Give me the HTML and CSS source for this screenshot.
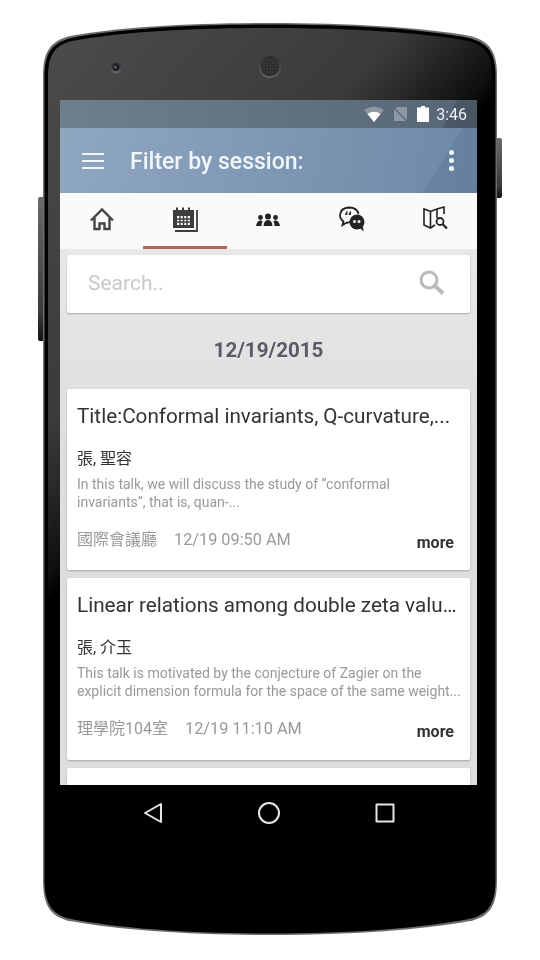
FILE: index.html
```html
<!DOCTYPE html>
<html lang="en">
<head>
    <meta charset="UTF-8">
    <title>Filter by session</title>
    <link rel="stylesheet" href="styles.css">
</head>
<body>
    <div class="phone">
        <!-- device shell sits behind the screen -->
        <svg class="shell" width="540" height="960" viewBox="0 0 540 960">
            <defs>
                <linearGradient id="shellFace" gradientUnits="userSpaceOnUse" x1="48" y1="28" x2="333" y2="280">
                    <stop offset="0" stop-color="#4c4c4c"/>
                    <stop offset="0.7" stop-color="#3a3a3a"/>
                    <stop offset="0.8" stop-color="#2a2a2a"/>
                    <stop offset="0.95" stop-color="#0f0f0f"/>
                    <stop offset="1" stop-color="#000"/>
                </linearGradient>
                <linearGradient id="keyFill" x1="0" y1="0" x2="0" y2="1">
                    <stop offset="0" stop-color="#6a6a6a"/>
                    <stop offset="0.8" stop-color="#3a3a3a"/>
                    <stop offset="1" stop-color="#111"/>
                </linearGradient>
                <linearGradient id="ringFill" x1="0" y1="0" x2="0" y2="1">
                    <stop offset="0" stop-color="#2a2a2a"/>
                    <stop offset="1" stop-color="#6a6a6a"/>
                </linearGradient>
                <pattern id="grille" width="3" height="3" patternUnits="userSpaceOnUse">
                    <circle cx="1.500" cy="1.500" r="0.700" fill="#222"/>
                </pattern>
            </defs>
            <rect x="38" y="197" width="8" height="144" rx="2" fill="url(#keyFill)"/>
            <rect x="494" y="138" width="8" height="60" rx="2" fill="url(#keyFill)"/>
            <path d="M43 76C43 52 50 41 70 36C120 27 190 23 270 23C350 23 420 27 470 36C490 41 497 52 497 76L497 880C497 905 490 917 470 921C420 930 350 935 270 935C190 935 120 930 70 921C50 917 43 905 43 880Z" fill="#6c6c6c"/>
            <path d="M44.500 76C44.500 53 52 43 71 38C120 28.500 190 24.500 270 24.500C350 24.500 420 28.500 469 38C488 43 495.500 53 495.500 76L495.500 880C495.500 904 488 915 469 919C420 928.500 350 933.500 270 933.500C190 933.500 120 928.500 71 919C52 915 44.500 904 44.500 880Z" fill="#000"/>
            <path d="M48 76C48 55 55 45 72 41C120 32 190 28 270 28C350 28 420 32 468 41C485 45 492 55 492 76L492 880C492 900 485 912 468 916C420 925 350 930 270 930C190 930 120 925 72 916C55 912 48 900 48 880Z" fill="url(#shellFace)"/>
            <circle cx="116" cy="68" r="5.500" fill="url(#ringFill)"/>
            <circle cx="116" cy="67.500" r="3.500" fill="#1c1c24"/>
            <circle cx="115.500" cy="67" r="1.500" fill="#5c5c78"/>
            <circle cx="270" cy="67" r="11" fill="url(#ringFill)"/>
            <circle cx="270" cy="67" r="9.500" fill="#343434"/>
            <circle cx="270" cy="67" r="8.500" fill="url(#grille)"/>
        </svg>

        <div class="screen">
            <div class="status-bar">
                <svg class="status-icon" width="20" height="16" viewBox="0 0 20 16">
                    <path d="M0 4Q10 -3 20 4L10 16Z" fill="#8d98a3"/>
                    <path d="M3.500 8Q10 3.500 16.500 8L10 16Z" fill="#fff"/>
                </svg>
                <svg class="status-icon" width="15" height="16" viewBox="0 0 15 16">
                    <path d="M4 1H14V15H1V4Z" fill="#8d98a3"/>
                    <path d="M0 1L15 16" stroke="#5c6b79" stroke-width="1.500"/>
                </svg>
                <svg class="status-icon" width="12" height="16" viewBox="0 0 12 16">
                    <path d="M4 0H8V1.500H12V16H0V1.500H4Z" fill="#fff"/>
                </svg>
                <span class="clock">3:46</span>
            </div>

            <header class="app-bar">
                <div class="menu-btn"><span></span><span></span><span></span></div>
                <h1 class="app-title">Filter by session:</h1>
                <div class="more-btn"><span></span><span></span><span></span></div>
            </header>

            <nav class="tabs">
                <div class="tab">
                    <svg width="28" height="28" viewBox="0 0 28 28" fill="none" stroke="#444" stroke-width="2.400">
                        <path d="M3 15.500L14 4.500L25 15.500"/>
                        <path d="M6.500 13V24H11.500V18.500H16.500V24H21.500V13"/>
                    </svg>
                </div>
                <div class="tab active">
                    <svg width="28" height="28" viewBox="0 0 28 28">
                        <path d="M2 5H5V2.500H7V5H11V2.500H13V5H17V2.500H19V5H23V23H2Z" fill="#3d3d3d"/>
                        <path d="M6 11H19V20H6Z" fill="#fafafa"/>
                        <path d="M9 11V20M12.500 11V20M16 11V20M6 14H19M6 17H19" stroke="#3d3d3d" stroke-width="1.400"/>
                        <path d="M26 5V26H4" fill="none" stroke="#3d3d3d" stroke-width="1.800"/>
                    </svg>
                </div>
                <div class="tab">
                    <svg width="28" height="28" viewBox="0 0 28 28" fill="#222">
                        <circle cx="14" cy="11.500" r="3"/>
                        <path d="M9.500 21Q10 15 14 15Q18 15 18.500 21Z"/>
                        <circle cx="6.500" cy="12.500" r="2.400"/>
                        <path d="M2 21Q3 15.500 6.500 15.500Q8 15.500 8.500 16.500Q7.500 18 7.500 21Z"/>
                        <circle cx="21.500" cy="12.500" r="2.400"/>
                        <path d="M26 21Q25 15.500 21.500 15.500Q20 15.500 19.500 16.500Q20.500 18 20.500 21Z"/>
                    </svg>
                </div>
                <div class="tab">
                    <svg width="28" height="28" viewBox="0 0 28 28">
                        <path d="M13 16Q12 17.500 8 18L4.500 20L5.500 16.500Q2 14 2 10Q2.500 3 11 2.500Q19 2.500 20.500 9" fill="none" stroke="#222" stroke-width="1.800"/>
                        <path d="M7.500 9.500L9 6.500V9.500ZM11 9.500L12.500 6.500V9.500Z" fill="#222" stroke="#222"/>
                        <circle cx="19" cy="17" r="7.500" fill="#222"/>
                        <path d="M22 23L25.500 26.500L25 21Z" fill="#222"/>
                        <circle cx="16.500" cy="16.500" r="1.500" fill="#fafafa"/>
                        <circle cx="21" cy="16.500" r="1.500" fill="#fafafa"/>
                    </svg>
                </div>
                <div class="tab">
                    <svg width="28" height="28" viewBox="0 0 28 28" fill="none" stroke="#222" stroke-width="1.600">
                        <path d="M14 20L9.500 23L3 20V4L9.500 6.500L16 4L23 2V9"/>
                        <path d="M9.500 6.500V23M16 4V13"/>
                        <circle cx="19" cy="16.500" r="3.500" stroke-width="1.800"/>
                        <path d="M21.500 19L26 23.500" stroke-width="2.200"/>
                    </svg>
                </div>
            </nav>

            <main class="content">
                <div class="search-box">
                    <span class="search-text">Search..</span>
                    <svg width="28" height="28" viewBox="0 0 28 28" fill="none" stroke="#bbb">
                        <circle cx="11" cy="10" r="8" stroke-width="3"/>
                        <path d="M17 16L25 23.500" stroke-width="4"/>
                    </svg>
                </div>

                <h2 class="date-head">12/19/2015</h2>

                <article class="card">
                    <h3 class="card-title">Title:Conformal invariants, Q-curvature,...</h3>
                    <div class="speaker">張, 聖容</div>
                    <p class="abstract">In this talk, we will discuss the study of ”conformal<br>invariants”, that is, quan-...</p>
                    <div class="card-foot">
                        <span class="place">國際會議廳</span>
                        <span class="time">12/19 09:50 AM</span>
                        <span class="more">more</span>
                    </div>
                </article>

                <article class="card">
                    <h3 class="card-title">Linear relations among double zeta valu…</h3>
                    <div class="speaker">張, 介玉</div>
                    <p class="abstract">This talk is motivated by the conjecture of Zagier on the explicit dimension formula for the space of the same weight...</p>
                    <div class="card-foot">
                        <span class="place">理學院104室</span>
                        <span class="time">12/19 11:10 AM</span>
                        <span class="more">more</span>
                    </div>
                </article>

                <article class="card"></article>
            </main>
        </div>

        <div class="nav-keys">
            <svg width="20" height="22" viewBox="0 0 20 22" fill="none" stroke="#e6e6e6" stroke-width="2" stroke-linejoin="round">
                <path d="M18 2V20L2 11Z"/>
            </svg>
            <svg width="22" height="22" viewBox="0 0 22 22" fill="none" stroke="#e6e6e6" stroke-width="2">
                <circle cx="11" cy="11" r="10"/>
            </svg>
            <svg width="20" height="20" viewBox="0 0 20 20" fill="none" stroke="#e6e6e6" stroke-width="2" stroke-linejoin="round">
                <rect x="1.500" y="1.500" width="17" height="17"/>
            </svg>
        </div>
    </div>
</body>
</html>
```

FILE: styles.css
```css
* {
    box-sizing: border-box;
}

body {
    margin: 0;
    background-color: #fff;
    font-family: Roboto, "Noto Sans CJK TC", sans-serif;
}

.phone {
    position: relative;
    width: 540px;
    height: 960px;
    padding: 100px 63px 0 60px;
    overflow: hidden;
}

.shell {
    position: absolute;
    top: 0;
    left: 0;
}

.screen {
    position: relative;
    width: 417px;
    height: 685px;
    overflow: hidden;
    display: flex;
    flex-direction: column;
    background-color: #e0e0e0;
    filter: blur(0.35px);
}

.status-bar {
    height: 28px;
    flex: none;
    display: flex;
    align-items: center;
    justify-content: flex-end;
    padding-right: 10px;
    background: linear-gradient(118deg, transparent 92%, rgba(0, 0, 0, 0.16) 92%), linear-gradient(100deg, #6f7f8e, #566676);
}

.status-icon {
    margin-right: 9px;
}

.status-icon + .clock {
    margin-left: -2px;
}

.clock {
    font-size: 16px;
    color: #eef1f3;
}

.app-bar {
    height: 65px;
    flex: none;
    display: flex;
    align-items: center;
    padding: 0 23px 0 22px;
    color: #f2f5f8;
    background: linear-gradient(122deg, transparent 88%, rgba(40, 70, 100, 0.12) 88%), linear-gradient(100deg, #90a7c0, #6d88a6);
}

.menu-btn {
    width: 22px;
    display: flex;
    flex-direction: column;
    gap: 5px;
    margin-right: 26px;
}

.menu-btn span {
    height: 2px;
    background-color: #f2f5f8;
}

.app-title {
    flex: 1;
    margin: 0;
    padding-top: 2px;
    font-size: 23px;
    font-weight: 500;
}

.more-btn {
    display: flex;
    flex-direction: column;
    gap: 3px;
}

.more-btn span {
    width: 5px;
    height: 5px;
    border-radius: 50%;
    background-color: #f2f5f8;
}

.tabs {
    height: 56px;
    flex: none;
    display: grid;
    grid-template-columns: repeat(5, 1fr);
    background-color: #fafafa;
    box-shadow: 0 1px 2px rgba(0, 0, 0, 0.15);
}

.tab {
    display: flex;
    align-items: center;
    justify-content: center;
    padding-bottom: 2px;
    border-bottom: 3px solid transparent;
}

.tab.active {
    border-bottom-color: #b85f5f;
}

.content {
    flex: 1;
    padding: 6px 7px 0;
    background: linear-gradient(#e8e8e8, #dedede 200px);
}

.search-box {
    height: 58px;
    display: flex;
    align-items: center;
    justify-content: space-between;
    padding: 0 24px 0 21px;
    background-color: #fff;
    border-radius: 2px;
    box-shadow: 0 1px 2px rgba(0, 0, 0, 0.25);
}

.search-text {
    font-size: 21px;
    color: #c8c8c8;
    position: relative;
    top: -1px;
}

.date-head {
    margin: 0;
    height: 76px;
    line-height: 74px;
    text-align: center;
    font-size: 20.600px;
    font-weight: 700;
    color: #5a5b69;
}

.card {
    height: 181.400px;
    margin-bottom: 8px;
    padding: 14px 10px 0;
    background-color: #fff;
    border-radius: 2px;
    box-shadow: 0 1px 2px rgba(0, 0, 0, 0.25);
}

.card-title {
    margin: 0;
    font-size: 20.700px;
    font-weight: 400;
    line-height: 26px;
    color: #333;
    white-space: nowrap;
}

.speaker {
    margin-top: 19px;
    font-size: 16px;
    line-height: 22px;
    color: #333;
}

.abstract {
    margin: 5px -8px 0 0;
    font-size: 14px;
    line-height: 18px;
    color: #999;
}

.card-foot {
    display: flex;
    align-items: baseline;
    margin-top: 15px;
    font-size: 16.300px;
    color: #999;
}

.place {
    margin-right: 17px;
    font-size: 16px;
}

.more {
    margin-left: auto;
    margin-right: 6px;
    position: relative;
    top: 3px;
    font-size: 16px;
    font-weight: 700;
    color: #333;
}

.nav-keys {
    position: relative;
    width: 417px;
    display: flex;
    align-items: center;
    padding: 17px 0 0 83px;
    gap: 95px;
}
```
